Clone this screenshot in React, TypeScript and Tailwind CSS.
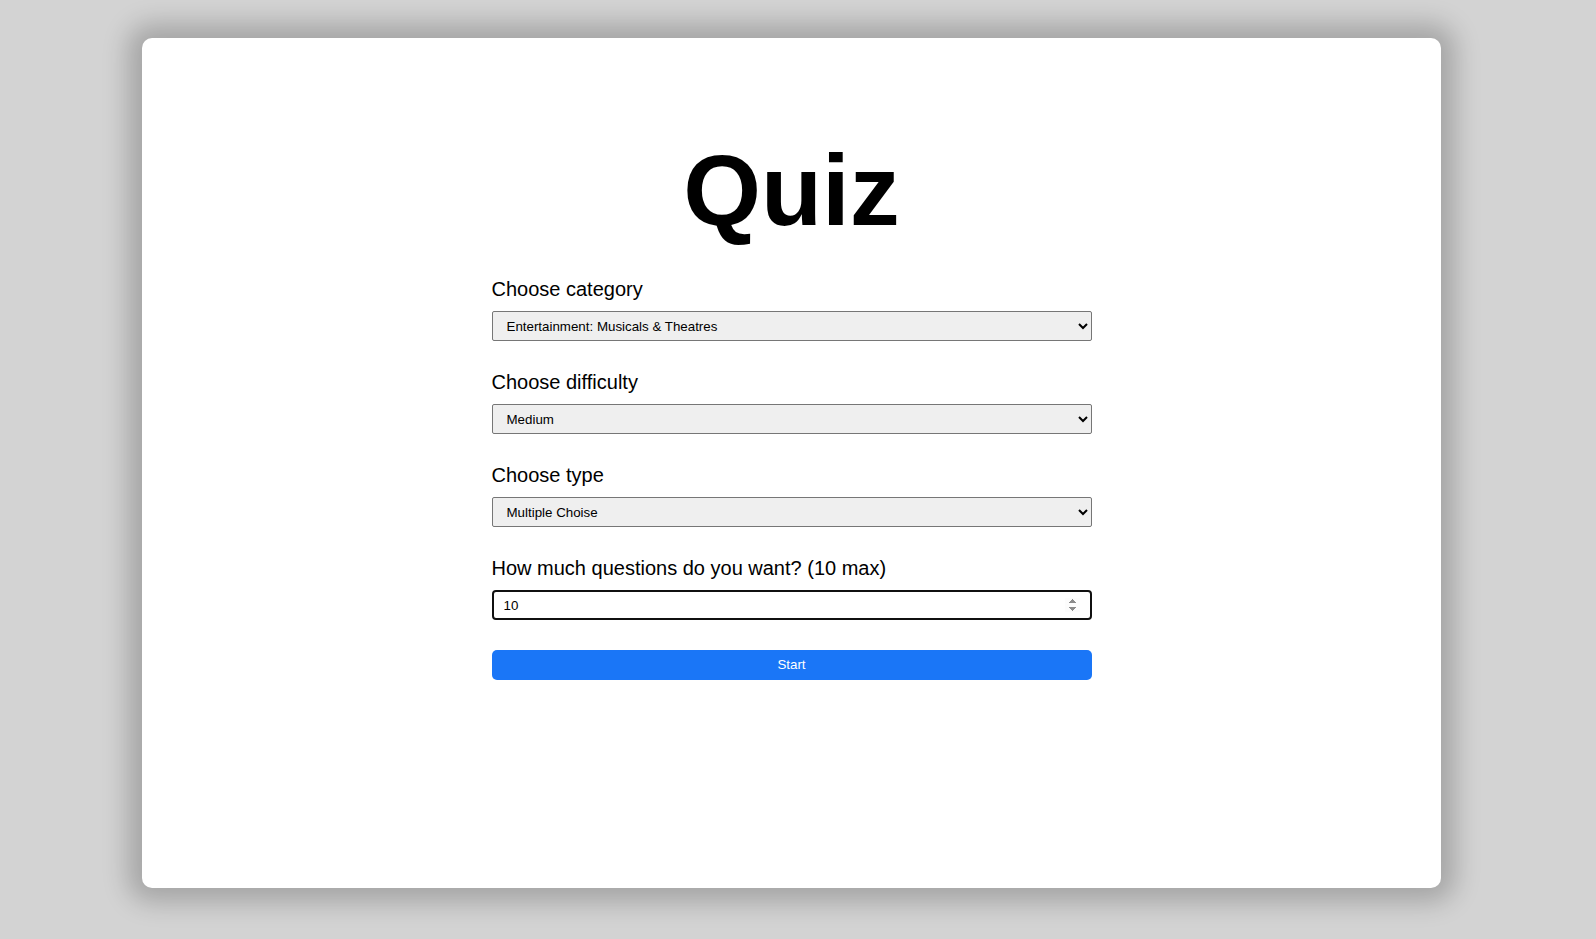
import React from "react";

const selectCls =
  "block w-full h-[30px] mt-[10px] pl-[10px] pr-[4px] border border-[#767676] bg-[#efefef] rounded-[2px] text-[13.33px] text-black";

export default function App() {
  return (
    <div className="min-h-screen h-[939px] overflow-hidden bg-[#d3d3d3] pt-[38px] font-['Liberation_Sans',Arial,sans-serif]">
      <div className="ml-[142px] w-[1299px] h-[850px] bg-white rounded-[10px] shadow-[0_0_26px_14px_rgba(0,0,0,0.22)] flex flex-col items-center pt-[99px]">
        <h1 className="text-[100px] leading-[107px] font-bold text-black">Quiz</h1>
        <form className="w-[600px] mt-[34px]" onSubmit={(e) => e.preventDefault()}>
          <div className="mb-[30px]">
            <label className="block text-[20px] leading-[23px] text-black">Choose category</label>
            <select className={selectCls} defaultValue="musicals">
              <option value="any">Any Category</option>
              <option value="musicals">Entertainment: Musicals &amp; Theatres</option>
            </select>
          </div>
          <div className="mb-[30px]">
            <label className="block text-[20px] leading-[23px] text-black">Choose difficulty</label>
            <select className={selectCls} defaultValue="medium">
              <option value="easy">Easy</option>
              <option value="medium">Medium</option>
              <option value="hard">Hard</option>
            </select>
          </div>
          <div className="mb-[30px]">
            <label className="block text-[20px] leading-[23px] text-black">Choose type</label>
            <select className={selectCls} defaultValue="multiple">
              <option value="multiple">Multiple Choise</option>
              <option value="boolean">True / False</option>
            </select>
          </div>
          <div>
            <label className="block text-[20px] leading-[23px] text-black">How much questions do you want? (10 max)</label>
            <input
              type="number"
              autoFocus
              defaultValue={10}
              min={1}
              max={10}
              className="block w-full h-[30px] mt-[10px] px-[10px] border-2 border-[#101010] rounded-[4px] bg-white text-[13.33px] text-black outline-none"
            />
          </div>
          <button
            type="submit"
            className="block w-full h-[30px] mt-[30px] bg-[#1a76f7] text-white text-[13.33px] rounded-[5px]"
          >
            Start
          </button>
        </form>
      </div>
    </div>
  );
}
